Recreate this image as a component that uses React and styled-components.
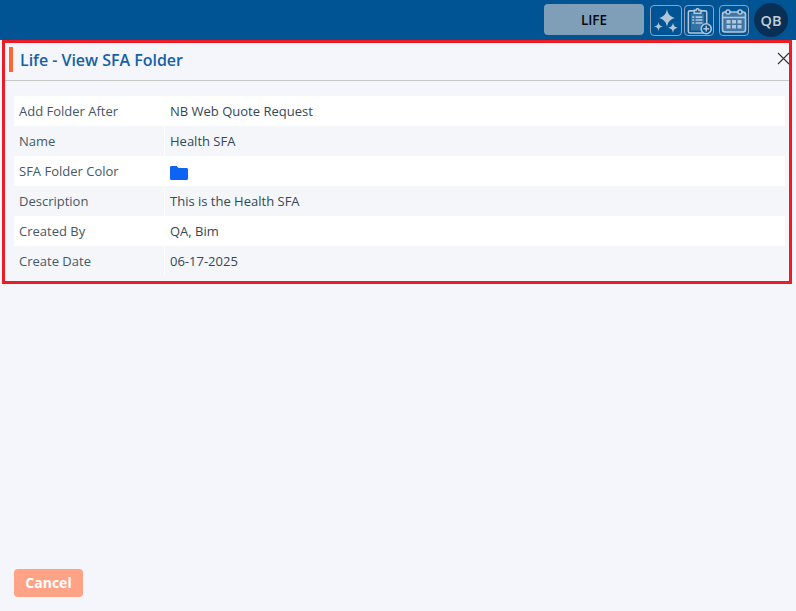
import React from "react";
import styled, { createGlobalStyle } from "styled-components";

const Global = createGlobalStyle`
  html, body { margin: 0; padding: 0; height: 100%; background: #f5f6fb; }
  body { font-family: "Open Sans", "Noto Sans", sans-serif; color: #3b4a57; }
  #root { height: 100%; }
`;

const Page = styled.div`
  display: flex;
  flex-direction: column;
  height: 611px;
  overflow: hidden;
  background: #f5f6fb;
`;

const TopBar = styled.header`
  flex: none;
  height: 40px;
  box-sizing: border-box;
  padding: 3px 8px 0 0;
  background: #005494;
  display: flex;
  justify-content: flex-end;
  align-items: flex-start;
`;

const ProductButton = styled.button`
  width: 100px;
  height: 31px;
  margin: 1px 6px 0 0;
  border: 0;
  border-radius: 4px;
  background: #7f9fb9;
  color: #05080c;
  font: 600 13.5px "Open Sans", sans-serif;
  padding: 0;
`;

const IconBox = styled.button`
  width: ${p => p.$w}px;
  height: 31px;
  margin: 2px ${p => p.$gap}px 0 0;
  padding: 0;
  box-sizing: border-box;
  background: transparent;
  border: 1px solid #8da3bd;
  border-radius: 4px;
  display: flex;
  align-items: center;
  justify-content: center;
`;

const Avatar = styled.div`
  width: 34px;
  height: 34px;
  border-radius: 50%;
  background: #0a2f55;
  color: #c3cfdb;
  font-size: 14.5px;
  font-weight: 600;
  display: flex;
  align-items: center;
  justify-content: center;
`;

const Panel = styled.section`
  flex: none;
  box-sizing: border-box;
  height: 244px;
  margin: 0 4px 0 2px;
  border: 3px solid #ed1c24;
`;

const TitleRow = styled.div`
  height: 38px;
  box-sizing: border-box;
  padding: 4px 0 0 4px;
  border-bottom: 1px solid #c8c8c8;
  display: flex;
  align-items: flex-start;
  position: relative;
`;

const Accent = styled.span`
  width: 4px;
  height: 25px;
  background: #ff6633;
  margin-right: 7px;
`;

const Title = styled.h1`
  margin: 0;
  font-size: 16px;
  line-height: 26px;
  font-weight: 600;
  color: #1461a8;
  letter-spacing: -0.02px;
`;

const Close = styled.button`
  position: absolute;
  top: 9px;
  right: -1px;
  width: 13px;
  height: 13px;
  padding: 0;
  border: 0;
  background: transparent;
  display: flex;
`;

const Rows = styled.div`
  margin: 15px 4px 0 9px;
`;

const Row = styled.div`
  display: flex;
  height: 30px;
  align-items: center;
  font-size: 13px;
  background: ${p => (p.$alt ? "#f4f6fa" : "#fff")};
`;

const Label = styled.div`
  width: 151px;
  box-sizing: border-box;
  padding-left: 5px;
  height: 100%;
  display: flex;
  align-items: center;
  border-right: 1px solid #fff;
  color: #465866;
`;

const Value = styled.div`
  padding-left: 5px;
  color: #344757;
  display: flex;
  align-items: center;
`;

const FolderIcon = styled.svg`
  display: block;
  width: 18px;
  height: 14px;
  margin-top: 3px;
`;

const Footer = styled.footer`
  margin-top: auto;
  padding: 0 0 14px 14px;
`;

const CancelButton = styled.button`
  width: 69px;
  height: 28px;
  border: 0;
  border-radius: 4px;
  background: #ffa285;
  color: #fff;
  font: 700 14px "Open Sans", sans-serif;
  padding: 0 0 2px;
`;

const Sparkles = () => (
  <svg width="28" height="28" viewBox="0 0 28 28" fill="#b3c6d9">
    <path d="M15 2 C15.8 7 18 9.5 23 11 C18 12.5 15.8 15 15 20 C14.2 15 12 12.5 7 11 C12 9.5 14.2 7 15 2Z" />
    <path d="M6.5 15 C7 18 8 19 11 19.5 C8 20 7 21 6.5 24 C6 21 5 20 2 19.5 C5 19 6 18 6.5 15Z" />
    <path d="M21 15.5 C21.6 19 22.7 20 26 20.7 C22.7 21.4 21.6 22.5 21 26 C20.4 22.5 19.3 21.4 16 20.7 C19.3 20 20.4 19 21 15.5Z" />
  </svg>
);

const ClipboardPlus = () => (
  <svg width="29" height="30" viewBox="0 0 29 30" fill="none" stroke="#b3c6d9" strokeWidth="1.6">
    <rect x="3.5" y="4.5" width="19" height="23" rx="1.5" />
    <rect x="6" y="7" width="14" height="18" fill="#5f8db3" stroke="none" opacity=".55" />
    <path d="M9.5 7 V4 H11.5 C11.5 1.6 14.5 1.6 14.5 4 H16.5 V7Z" fill="#005494" />
    <path d="M11 11 H18 M11 14 H18 M11 17 H18 M7.5 11 H9.5 M7.5 14 H9.5 M7.5 17 H9.5" />
    <circle cx="22" cy="23" r="5.2" fill="#005494" />
    <path d="M22 20 V26 M19 23 H25" />
  </svg>
);

const Calendar = () => (
  <svg width="28" height="28" viewBox="0 0 28 28" fill="none" stroke="#b3c6d9" strokeWidth="1.6">
    <rect x="2.5" y="5" width="23" height="20" rx="2.5" fill="#3f78a6" />
    <path d="M2.5 10.5 H25.5" />
    <circle cx="8" cy="5" r="2" fill="#005494" />
    <circle cx="20" cy="5" r="2" fill="#005494" />
    <path
      d="M6.5 13h4v3.5h-4z M12 13h4v3.5h-4z M17.5 13h4v3.5h-4z M6.5 18h4v3.5h-4z M12 18h4v3.5h-4z M17.5 18h4v3.5h-4z"
      fill="#b3c6d9"
      stroke="none"
    />
  </svg>
);

const Folder = () => (
  <FolderIcon viewBox="0 0 19 14" preserveAspectRatio="none">
    <path
      d="M1.5 0 H7 L9 2 H17.5 C18.4 2 19 2.6 19 3.5 V12.5 C19 13.4 18.4 14 17.5 14 H1.5 C0.6 14 0 13.4 0 12.5 V1.5 C0 0.6 0.6 0 1.5 0Z"
      fill="#0d63f3"
    />
  </FolderIcon>
);

const rows = [
  ["Add Folder After", "NB Web Quote Request"],
  ["Name", "Health SFA"],
  ["SFA Folder Color", <Folder key="f" />],
  ["Description", "This is the Health SFA"],
  ["Created By", "QA, Bim"],
  ["Create Date", "06-17-2025"],
];

export default function App() {
  return (
    <Page>
      <Global />
      <TopBar>
        <ProductButton>LIFE</ProductButton>
        <IconBox $w={32} $gap={2}><Sparkles /></IconBox>
        <IconBox $w={30} $gap={5}><ClipboardPlus /></IconBox>
        <IconBox $w={30} $gap={5}><Calendar /></IconBox>
        <Avatar>QB</Avatar>
      </TopBar>
      <Panel>
        <TitleRow>
          <Accent />
          <Title>Life - View SFA Folder</Title>
          <Close aria-label="Close">
            <svg width="13" height="13" viewBox="0 0 13 13" stroke="#333" strokeWidth="1.1">
              <path d="M1 1 L12 12 M12 1 L1 12" />
            </svg>
          </Close>
        </TitleRow>
        <Rows>
          {rows.map(([label, value], i) => (
            <Row key={label} $alt={i % 2 === 1}>
              <Label>{label}</Label>
              <Value>{value}</Value>
            </Row>
          ))}
        </Rows>
      </Panel>
      <Footer>
        <CancelButton>Cancel</CancelButton>
      </Footer>
    </Page>
  );
}
